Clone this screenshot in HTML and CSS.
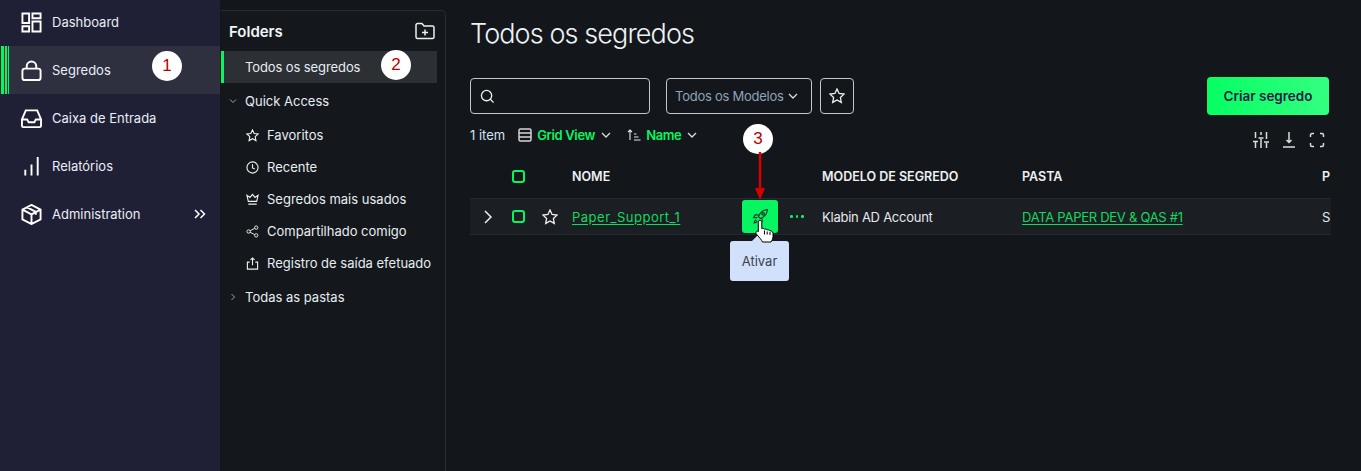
FILE: index.html
```html
<!DOCTYPE html>
<html lang="pt">
<head>
  <meta charset="UTF-8">
  <title>Todos os segredos</title>
  <link rel="stylesheet" href="styles.css">
</head>
<body>
<div class="app">
  <nav class="sidebar">
    <a class="nav-item">
      <svg class="nav-icon" viewBox="0 0 22 22"><path d="M1.500 1.500h7v10h-7zM12 1.500h8.500v5h-8.500zM12 10h8.500v10.500h-8.500zM1.500 15h7v5.500h-7z"/></svg>
      <span>Dashboard</span>
    </a>
    <a class="nav-item active">
      <svg class="nav-icon" viewBox="0 0 22 22"><rect x="1.500" y="9" width="19" height="12" rx="2.500"/><path d="M6 9V6.500a5 5 0 0 1 10 0V9"/></svg>
      <span>Segredos</span>
    </a>
    <a class="nav-item">
      <svg class="nav-icon" viewBox="0 0 22 22"><path d="M1 12 5 2.500h12L21 12v6.500a1.500 1.500 0 0 1-1.500 1.500h-17A1.500 1.500 0 0 1 1 18.500zM1 12h5.500l1.500 3h6l1.500-3H21"/></svg>
      <span>Caixa de Entrada</span>
    </a>
    <a class="nav-item">
      <svg class="nav-icon" viewBox="0 0 22 22"><path d="M4.500 14.500v6M11 9v11.500M17.500 1v19.500"/></svg>
      <span>Relatórios</span>
    </a>
    <a class="nav-item">
      <svg class="nav-icon" viewBox="0 0 22 22"><path d="M11 1 20.500 5.800v10.400L11 21 1.500 16.200V5.800zM1.500 5.800 11 10.800l9.500-5M11 10.800V21M6 3.300l9.500 5v3"/></svg>
      <span>Administration</span>
      <svg class="nav-more" viewBox="0 0 12 10"><path d="M1 1l4 4-4 4M6.500 1l4 4-4 4"/></svg>
    </a>
  </nav>

  <aside class="folders">
    <header class="folders-head">
      <h2>Folders</h2>
      <svg class="add-folder" viewBox="0 0 20 18"><path d="M1 3a1.500 1.500 0 0 1 1.500-1.500h4.500l2 2.500h8.500A1.500 1.500 0 0 1 19 5.500v9.500a1.500 1.500 0 0 1-1.500 1.500h-15A1.500 1.500 0 0 1 1 15zM10 7.500v6M7 10.500h6"/></svg>
    </header>
    <a class="folder-all">Todos os segredos</a>
    <div class="tree-head">
      <svg class="caret" viewBox="0 0 8 8"><path d="M1 2.500l3 3 3-3"/></svg>
      <span>Quick Access</span>
    </div>
    <a class="tree-item">
      <svg class="tree-icon" viewBox="0 0 14 14"><path d="M7 1l1.800 3.900 4.200.5-3.100 2.900.8 4.200L7 10.400l-3.700 2.100.8-4.200L1 5.400l4.200-.5z"/></svg>
      <span>Favoritos</span>
    </a>
    <a class="tree-item">
      <svg class="tree-icon" viewBox="0 0 14 14"><circle cx="7" cy="7" r="6"/><path d="M7 3.500V7.500l2.500 1"/></svg>
      <span>Recente</span>
    </a>
    <a class="tree-item">
      <svg class="tree-icon" viewBox="0 0 14 14"><path d="M2.500 9 1 2.500l3.300 2.300L7 1.500l2.700 3.300L13 2.500 11.500 9zM2.500 12h9"/></svg>
      <span>Segredos mais usados</span>
    </a>
    <a class="tree-item">
      <svg class="tree-icon thin" viewBox="0 0 14 14"><circle cx="2.800" cy="7" r="1.800"/><circle cx="11" cy="2.800" r="1.800"/><circle cx="11" cy="11.200" r="1.800"/><path d="M4.400 6.200 9.400 3.600M4.400 7.800l5 2.600"/></svg>
      <span>Compartilhado comigo</span>
    </a>
    <a class="tree-item">
      <svg class="tree-icon" viewBox="0 0 14 14"><path d="M4 5.500H1.500v7.500h11V5.500H10M7 9V1M4.800 3.200 7 1l2.200 2.200"/></svg>
      <span>Registro de saída efetuado</span>
    </a>
    <div class="tree-head">
      <svg class="caret" viewBox="0 0 8 8"><path d="M2.500 1l3 3-3 3"/></svg>
      <span>Todas as pastas</span>
    </div>
  </aside>

  <main class="content">
    <h1>Todos os segredos</h1>

    <div class="toolbar">
      <div class="search">
        <svg class="search-icon" viewBox="0 0 16 16"><circle cx="7" cy="7" r="5.500"/><path d="M11 11l3.500 3.500"/></svg>
      </div>
      <button class="select">Todos os Modelos
        <svg class="chev" viewBox="0 0 10 6"><path d="M1 1l4 4 4-4"/></svg>
      </button>
      <button class="star-btn">
        <svg class="star" viewBox="0 0 16 16"><path d="M8 1l2.100 4.500 4.900.6-3.600 3.400.9 4.900L8 11.900l-4.300 2.500.9-4.900L1 6.100l4.900-.6z"/></svg>
      </button>
      <button class="create">Criar segredo</button>
    </div>

    <div class="viewbar">
      <span class="count">1 item</span>
      <svg class="grid-icon" viewBox="0 0 14 14"><rect x="1" y="1" width="12" height="12" rx="1.500"/><path d="M1 5h12M1 9h12"/></svg>
      <span class="view-label">Grid View</span>
      <svg class="chev" viewBox="0 0 10 6"><path d="M1 1l4 4 4-4"/></svg>
      <svg class="sort-icon" viewBox="0 0 14 14"><path d="M3 12V2M1 4l2-2 2 2M7 6h2.500M7 9h4.500M7 12h6.500"/></svg>
      <span class="view-label">Name</span>
      <svg class="chev" viewBox="0 0 10 6"><path d="M1 1l4 4 4-4"/></svg>
      <div class="tools">
        <svg class="tool" viewBox="0 0 16 16"><path d="M2.500 0v6M2.500 10v6M0 9.500h5M8 0v3M8 7v9M5.500 6h5M13.500 0v7M13.500 11v5M11 10h5"/></svg>
        <svg class="tool" viewBox="0 0 16 16"><path d="M8 0v10M5.500 8 8 10.500 10.500 8M2 15h12"/></svg>
        <svg class="tool" viewBox="0 0 16 16"><path d="M1.500 5V3a1.500 1.500 0 0 1 1.500-1.500h2M11 1.500h2A1.500 1.500 0 0 1 14.500 3v2M14.500 11v2a1.500 1.500 0 0 1-1.500 1.500h-2M5 14.500H3A1.500 1.500 0 0 1 1.500 13v-2"/></svg>
      </div>
    </div>

    <div class="table">
      <div class="grid-row head-row">
        <span></span>
        <span class="check"></span>
        <span></span>
        <span class="cell-name">NOME</span>
        <span></span>
        <span>MODELO DE SEGREDO</span>
        <span>PASTA</span>
        <span>P</span>
      </div>
      <div class="grid-row body-row">
        <svg class="expand" viewBox="0 0 8 14"><path d="M1 1l6 6-6 6"/></svg>
        <span class="check"></span>
        <svg class="star" viewBox="0 0 16 16"><path d="M8 1l2.100 4.500 4.900.6-3.600 3.400.9 4.900L8 11.900l-4.300 2.500.9-4.900L1 6.100l4.900-.6z"/></svg>
        <a class="cell-name link link-name">Paper_Support_1</a>
        <div class="actions">
          <button class="launch">
            <svg class="rocket" viewBox="0 0 16 16"><path d="M14.500 1.500c-4 .2-6.800 2.500-8.500 6.500l2 2c4-1.700 6.300-4.500 6.500-8.500zM6 6.500H3L1.500 9H5M9.500 10v3L7 14.500V11M4 11c-1.200.4-2 1.500-2 3 1.500 0 2.600-.8 3-2"/><circle cx="10.500" cy="5.500" r="1.200"/></svg>
          </button>
          <span class="dots"><i></i><i></i><i></i></span>
        </div>
        <span class="cell-model">Klabin AD Account</span>
        <a class="link link-folder">DATA PAPER DEV &amp; QAS #1</a>
        <span>S</span>
      </div>
    </div>
  </main>
</div>

<!-- anotacoes por cima da tela -->
<span class="marker marker-1">1</span>
<span class="marker marker-2">2</span>
<span class="marker marker-3">3</span>
<svg class="arrow" viewBox="0 0 10 48"><path class="arrow-line" d="M5 0v38"/><path class="arrow-head" d="M0 36h10L5 48z"/></svg>
<div class="tooltip">Ativar</div>
<svg class="cursor" viewBox="0 0 20 23"><path d="M5 .5c1.100 0 1.800.8 1.800 1.900v6.300c.5-.5 2.200-.6 2.700.5.700-.4 2.300-.3 2.700.8.800-.4 2.300-.2 2.700 1 .9-.3 3.100.1 3.100 2.200v3.300c0 2.300-1 3.700-2 5.500H7.500c-.8-1.800-2.500-3.800-5.700-7.500C.6 13.200.8 11.800 1.700 11.300c1-.6 1.700.1 1.600.4V2.400C3.300 1.300 3.900.5 5 .5z"/><path d="M9.500 10.500v4M12.200 11.500v3M15 12v3"/></svg>
</body>
</html>
```

FILE: styles.css
```css
* {
  box-sizing: border-box;
  margin: 0;
  padding: 0;
}

body {
  height: 471px;
  overflow: hidden;
  background: #13171b;
  color: #e6edf2;
  font-family: "Inter", "Noto Sans", sans-serif;
  font-size: 13px;
  position: relative;
}

svg {
  fill: none;
  stroke: currentColor;
  flex: none;
}

button {
  font-family: inherit;
  background: none;
  cursor: pointer;
}

.app {
  display: flex;
  height: 471px;
}

/* barra lateral */
.sidebar {
  width: 220px;
  flex: none;
  background: #1f2035;
  margin-top: -2px;
}

.nav-item {
  height: 48px;
  display: flex;
  align-items: center;
  padding-left: 21px;
  gap: 10px;
  color: #e8eef6;
}

.nav-item.active {
  background: linear-gradient(90deg, #1f2035 0 1px, #07f561 1px 4px, #2e3040 4px 5px, #07f561 5px 7px, #2e3040 7px 8px, #07f561 8px 9px, #2e3040 9px);
}

.nav-icon {
  width: 21px;
  height: 21px;
  stroke-width: 2;
  color: #fff;
}

.nav-more {
  width: 12px;
  height: 10px;
  stroke-width: 1.500;
  margin-left: auto;
  margin-right: 14px;
  color: #fff;
}

/* painel de pastas */
.folders {
  width: 225px;
  flex: none;
  margin-top: 10px;
  margin-left: 1px;
  background: #14181c;
  border: 1px solid #2a2d33;
  border-width: 1px 1px 0 0;
  border-top-right-radius: 5px;
  padding-right: 8px;
}

.folders-head {
  height: 40px;
  display: flex;
  align-items: center;
  justify-content: space-between;
  padding: 0 2px 0 8px;
}

.folders-head h2 {
  font-size: 15px;
  font-weight: 600;
  color: #f2f5f8;
}

.add-folder {
  width: 20px;
  height: 18px;
  stroke-width: 1.500;
  color: #eee;
}

.folder-all {
  height: 32px;
  display: flex;
  align-items: center;
  padding-left: 21px;
  background: #2c3035;
  border-left: 3px solid #07f561;
  color: #e6edf2;
  letter-spacing: -0.1px;
}

.tree-head {
  height: 36px;
  display: flex;
  align-items: center;
  gap: 8px;
  padding-left: 8px;
}

.caret {
  width: 8px;
  height: 8px;
  color: #9aa0a6;
}

.tree-item {
  height: 32px;
  display: flex;
  align-items: center;
  gap: 8px;
  padding-left: 25px;
}

.tree-icon {
  width: 13px;
  height: 13px;
  stroke-width: 1.200;
  color: #f0f0f0;
}

.tree-icon.thin {
  stroke-width: 1;
}

/* conteudo */
.content {
  flex: 1;
  min-width: 0;
  padding: 17px 30px 0 24px;
  overflow: hidden;
}

.content h1 {
  font-size: 27px;
  font-weight: 300;
  line-height: 34px;
  letter-spacing: -0.9px;
  color: #eef2f5;
  margin-bottom: 26px;
}

.toolbar {
  display: flex;
  align-items: center;
  height: 38px;
}

.search {
  width: 180px;
  height: 36px;
  border: 1px solid #c4c7ca;
  border-radius: 4px;
  display: flex;
  align-items: center;
  padding-left: 9px;
  margin-right: 16px;
}

.search-icon {
  width: 15px;
  height: 15px;
  stroke-width: 1.400;
  color: #eee;
}

.select {
  width: 146px;
  height: 36px;
  border: 1px solid #c4c7ca;
  border-radius: 4px;
  display: flex;
  align-items: center;
  gap: 4px;
  padding-left: 8px;
  font-size: 13px;
  letter-spacing: -0.25px;
  color: #8fa3b8;
  margin-right: 8px;
}

.chev {
  width: 10px;
  height: 6px;
  stroke-width: 1.300;
  color: #d8dce0;
}

.star-btn {
  width: 34px;
  height: 36px;
  border: 1px solid #c4c7ca;
  border-radius: 4px;
  display: flex;
  align-items: center;
  justify-content: center;
}

.star {
  width: 16px;
  height: 16px;
  stroke-width: 1.300;
  color: #f2f2f2;
}

.create {
  margin-left: auto;
  margin-right: 2px;
  width: 122px;
  height: 38px;
  border: 0;
  border-radius: 4px;
  background: linear-gradient(90deg, #05ff62, #34ff80);
  color: #1c1d4a;
  font-size: 13.500px;
  font-weight: 600;
}

.viewbar {
  height: 26px;
  margin-top: 7px;
  display: flex;
  align-items: center;
}

.count {
  color: #cfe3f5;
  margin-right: 13px;
}

.grid-icon {
  width: 14px;
  height: 14px;
  stroke-width: 1.500;
  color: #d5d5d5;
  margin-right: 5px;
}

.view-label {
  color: #07f561;
  font-weight: 600;
  letter-spacing: -0.35px;
  margin-right: 6px;
}

.sort-icon {
  width: 14px;
  height: 14px;
  stroke-width: 1.100;
  color: #e5e5e5;
  margin-left: 16px;
  margin-right: 5px;
}

.tools {
  margin-left: auto;
  margin-top: 9px;
  margin-right: 6px;
  display: flex;
  gap: 12px;
}

.tool {
  width: 16px;
  height: 16px;
  stroke-width: 1.500;
  color: #dcdcdc;
}

/* tabela */
.table {
  margin-top: 6px;
  width: 861px;
  overflow: hidden;
}

.grid-row {
  display: grid;
  grid-template-columns: 35px 26px 37px 174px 80px 200px 300px 100px;
  align-items: center;
  justify-items: start;
  white-space: nowrap;
}

.head-row {
  height: 44px;
  font-weight: 600;
  font-size: 12.500px;
  color: #eef0f2;
}

.body-row {
  height: 37px;
  background: #1b1f24;
  border: solid #252832;
  border-width: 1px 0;
  color: #e6e9ec;
}

.cell-name {
  padding-left: 4px;
}

.cell-model {
  letter-spacing: -0.25px;
}

.check {
  width: 13px;
  height: 13px;
  border: 2px solid #07f561;
  border-radius: 3px;
  justify-self: center;
}

.expand {
  width: 8px;
  height: 14px;
  stroke-width: 1.500;
  color: #f0f0f0;
  justify-self: center;
}

.body-row .star {
  justify-self: center;
}

.link {
  color: #13d95c;
  text-decoration: underline;
  text-underline-offset: 2px;
}

.link-name {
  letter-spacing: 0.5px;
}

.link-folder {
  letter-spacing: -0.27px;
}

.actions {
  display: flex;
  align-items: center;
}

.launch {
  width: 36px;
  height: 33px;
  border: 0;
  border-radius: 3px;
  background: #07f561;
  display: flex;
  align-items: center;
  justify-content: center;
}

.rocket {
  width: 17px;
  height: 17px;
  stroke-width: 1.100;
  color: #123c2c;
}

.dots {
  margin-left: 12px;
  display: flex;
  gap: 3px;
}

.dots i {
  width: 2.500px;
  height: 2.500px;
  background: #07f561;
  border-radius: 50%;
}

/* anotacoes */
.marker {
  position: absolute;
  width: 30px;
  height: 30px;
  border-radius: 50%;
  background: #fff;
  color: #b80000;
  font-family: "Liberation Sans", sans-serif;
  font-size: 17px;
  display: flex;
  align-items: center;
  justify-content: center;
}

.marker-1 {
  left: 152px;
  top: 51px;
}

.marker-2 {
  left: 381px;
  top: 50px;
}

.marker-3 {
  left: 743px;
  top: 124px;
}

.arrow {
  position: absolute;
  left: 755px;
  top: 152px;
  width: 10px;
  height: 48px;
  stroke: none;
}

.arrow-line {
  stroke: #d60000;
  stroke-width: 2.500;
}

.arrow-head {
  fill: #d60000;
}

.tooltip {
  position: absolute;
  left: 730px;
  top: 241px;
  width: 59px;
  height: 40px;
  border-radius: 3px;
  background: #d2e1fb;
  color: #3a4150;
  display: flex;
  align-items: center;
  justify-content: center;
}

.tooltip::before {
  content: "";
  position: absolute;
  left: 22px;
  top: -6px;
  border: 6px solid transparent;
  border-top: 0;
  border-bottom-color: #d2e1fb;
}

.cursor {
  position: absolute;
  left: 755px;
  top: 220px;
  width: 20px;
  height: 23px;
  fill: #fff;
  stroke: #000;
  stroke-width: 1;
}
```
